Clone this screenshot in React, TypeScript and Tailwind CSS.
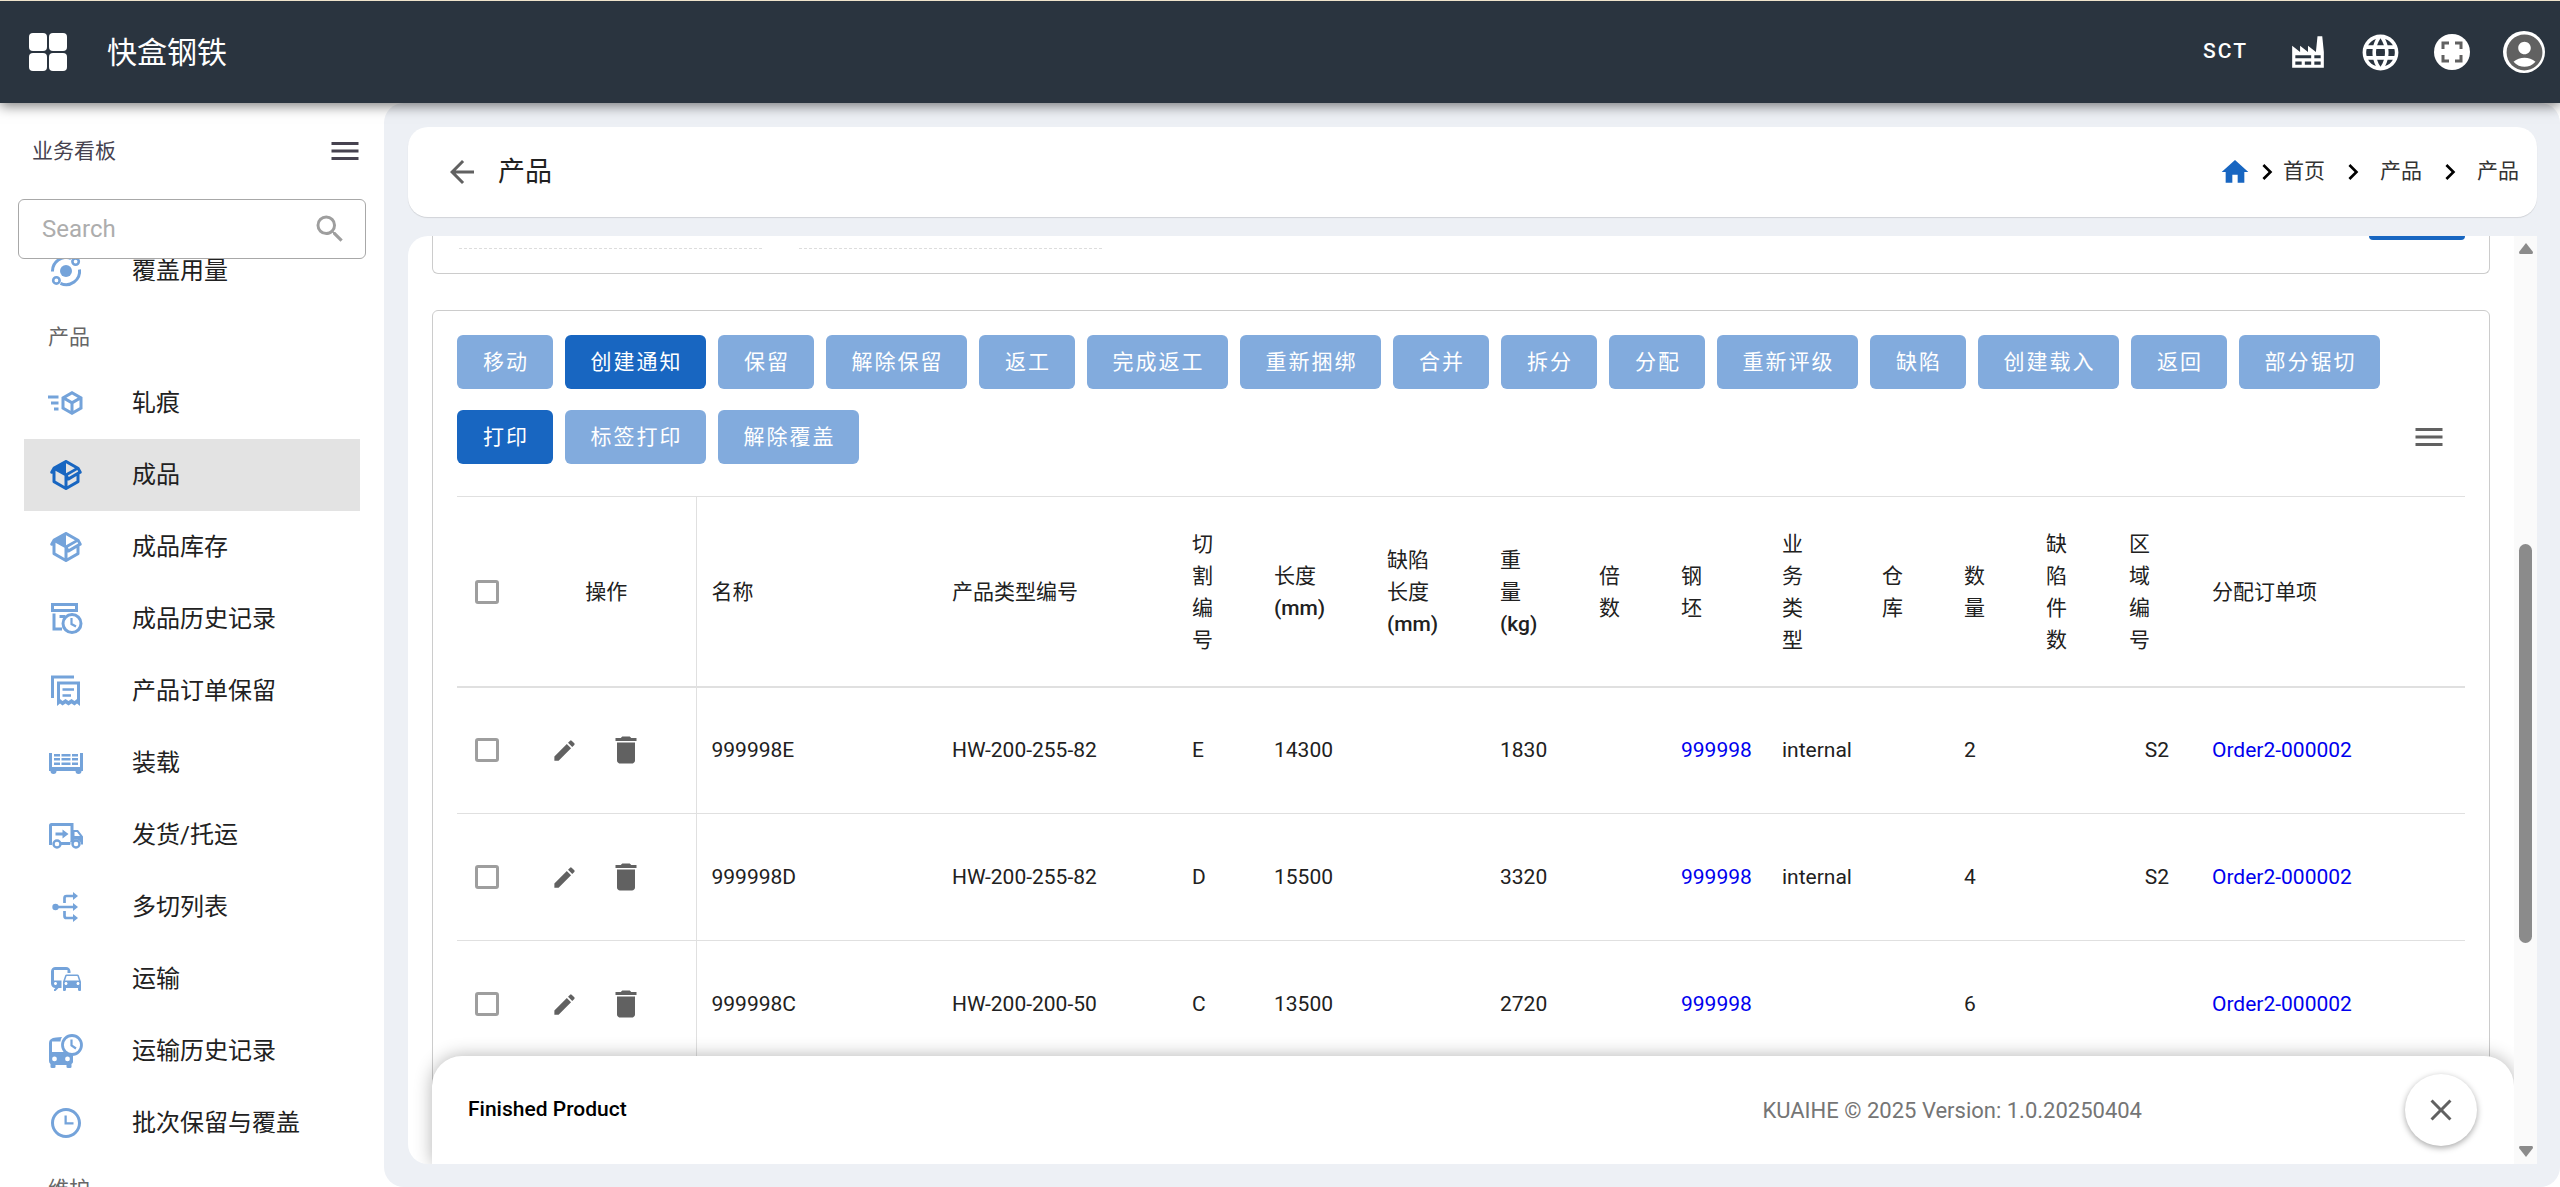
import { useState } from 'react'
import type { ReactNode } from 'react'
import {
  MdAccountCircle,
  MdArrowBack,
  MdChevronRight,
  MdClose,
  MdCommute,
  MdDelete,
  MdEdit,
  MdFullscreen,
  MdHome,
  MdLanguage,
  MdMenu,
  MdSearch,
} from 'react-icons/md'

function Icon({ children, size = 24 }: { children: ReactNode; size?: number }) {
  return (
    <svg className="size-9 shrink-0" viewBox={`0 0 ${size} ${size}`} fill="currentColor" aria-hidden="true">
      {children}
    </svg>
  )
}

const OrbitIcon = () => (
  <Icon size={36}>
    <circle cx="18" cy="18" r="6" />
    <g fill="none" stroke="currentColor" strokeWidth="3">
      <path d="M4.500 18.500A13.500 13.500 0 0 1 23 5.500" />
      <path d="M31.500 16.500A13.500 13.500 0 0 1 12.500 30.400" />
      <circle cx="27.600" cy="8.600" r="3.200" strokeWidth="2.600" />
      <circle cx="8.400" cy="27.400" r="3.200" strokeWidth="2.600" />
    </g>
  </Icon>
)

const CubeSendIcon = () => (
  <Icon>
    <path d="M16,4L9,8.04V15.96L16,20L23,15.96V8.04M16,6.31L19.8,8.5L16,10.69L12.21,8.5M0,7V9H7V7M11,10.11L15,12.42V17.11L11,14.81M21,10.11V14.81L17,17.11V12.42M2,11V13H7V11M4,15V17H7V15" />
  </Icon>
)

const PackageIcon = () => (
  <Icon>
    <path d="M2,10.96C1.5,10.68 1.35,10.07 1.63,9.59L3.13,7C3.24,6.8 3.41,6.66 3.6,6.58L11.43,2.18C11.59,2.06 11.79,2 12,2C12.21,2 12.41,2.06 12.57,2.18L20.47,6.62C20.66,6.72 20.82,6.88 20.91,7.08L22.36,9.6C22.64,10.08 22.47,10.69 22,10.96L21,11.54V16.5C21,16.88 20.79,17.21 20.47,17.38L12.57,21.82C12.41,21.94 12.21,22 12,22C11.79,22 11.59,21.94 11.43,21.82L3.53,17.38C3.21,17.21 3,16.88 3,16.5V10.96C2.7,11.13 2.32,11.14 2,10.96M12,4.15V4.15L12,10.85V10.85L17.96,7.5L12,4.15M5,15.91L11,19.29V12.58L5,9.21V15.91M19,15.91V12.69L14,15.59C13.67,15.77 13.3,15.76 13,15.6V19.29L19,15.91M13.85,13.36L20.13,9.73L19.55,8.72L13.27,12.35L13.85,13.36Z" />
  </Icon>
)

const ArchiveClockIcon = () => (
  <Icon size={36}>
    <g fill="none" stroke="currentColor" strokeWidth="3">
      <path d="M4.500 3.500H28.500V9.500H4.500Z" />
      <path d="M6 12.500V28H14" />
      <path d="M11.500 15.500H17" />
      <circle cx="24" cy="22.500" r="9" />
      <path d="M23.500 17V23L28 25.500" strokeWidth="2.200" />
    </g>
  </Icon>
)

const ReceiptsIcon = () => (
  <Icon size={36}>
    <g fill="none" stroke="currentColor" strokeWidth="3">
      <path d="M4.500 25V4H26" />
      <path d="M10.500 28V10H30.500V28" />
      <path d="M14.500 16.500H26M14.500 22.500H23" strokeWidth="2.600" />
    </g>
    <path d="M9 25H12V26L14.500 28L17.500 26L20.500 28L23.500 26L26.500 28L29 26V25H32V33L29 30.500L26.500 32.500L23.500 30.500L20.500 32.500L17.500 30.500L14.500 32.500L12 30.500L9 33Z" />
  </Icon>
)

const LoadIcon = () => (
  <Icon size={36}>
    <path d="M1 8H4V22H32V8H35V26H33.500A3 3 0 0 1 27.500 26H8.500A3 3 0 0 1 2.500 26H1Z" />
    <path d="M6 9H12V11.500H6ZM13.500 9H22.500V11.500H13.500ZM24 9H30V11.500H24ZM6 13H12V15.500H6ZM13.500 13H22.500V15.500H13.500ZM24 13H30V15.500H24ZM6 17.500H12V20H6ZM13.500 17.500H22.500V20H13.500ZM24 17.500H30V20H24Z" />
  </Icon>
)

const TruckIcon = () => (
  <Icon size={36}>
    <g fill="none" stroke="currentColor" strokeWidth="3">
      <path d="M4 26.500H2.500V8.500Q2.500 7.500 3.500 7.500H24V25" />
      <path d="M12.500 26.500H22" />
      <circle cx="9" cy="27" r="3.500" strokeWidth="2.400" />
      <circle cx="28" cy="27" r="3.500" strokeWidth="2.400" />
    </g>
    <path d="M24 13H30L35 19.500V27.500H33A5 5 0 0 0 23 27.500H22.500V24H24ZM26.500 15V19H32L29 15Z" fillRule="evenodd" />
    <path d="M7.500 15.500H14.500V12.500L20.500 17L14.500 21.500V18.500H7.500Z" />
  </Icon>
)

const SplitIcon = () => (
  <Icon size={36}>
    <circle cx="7.500" cy="18" r="3.200" />
    <path d="M7 18H26M16.500 14V9Q16.500 7 18.500 7H26M16.500 22V27Q16.500 29 18.500 29H26" fill="none" stroke="currentColor" strokeWidth="2.700" />
    <path d="M25 3L30 7L25 11ZM25 14L30 18L25 22ZM25 25L30 29L25 33Z" />
  </Icon>
)

const BusClockIcon = () => (
  <Icon size={36}>
    <path d="M1 10Q1 5 8 4.500L14 4Q12.500 6 12.500 8.500H4V19H17Q20 22 25 22.500V29Q25 30 23.500 31V34Q23.500 35 22 35H20Q18.500 35 18.500 34V32H7.500V34Q7.500 35 6 35H4Q2.500 35 2.500 34V31Q1 30 1 28ZM6.500 23.500A2.400 2.400 0 1 0 6.500 28.300A2.400 2.400 0 1 0 6.500 23.500ZM19.500 23.500A2.400 2.400 0 1 0 19.500 28.300A2.400 2.400 0 1 0 19.500 23.500Z" fillRule="evenodd" />
    <g fill="none" stroke="currentColor">
      <circle cx="24" cy="12" r="9.500" strokeWidth="2.800" />
      <path d="M23.500 6.500V12.500L28 15.500" strokeWidth="2.200" />
    </g>
  </Icon>
)

const ClockIcon = () => (
  <Icon>
    <path d="M12 20C16.4 20 20 16.4 20 12S16.4 4 12 4 4 7.6 4 12 7.6 20 12 20M12 2C17.5 2 22 6.5 22 12S17.5 22 12 22C6.5 22 2 17.5 2 12C2 6.5 6.5 2 12 2M17 11.5V13H11V7H12.5V11.5H17Z" />
  </Icon>
)

const navItems: { label: string; icon: ReactNode }[] = [
  { label: '轧痕', icon: <CubeSendIcon /> },
  { label: '成品', icon: <PackageIcon /> },
  { label: '成品库存', icon: <PackageIcon /> },
  { label: '成品历史记录', icon: <ArchiveClockIcon /> },
  { label: '产品订单保留', icon: <ReceiptsIcon /> },
  { label: '装载', icon: <LoadIcon /> },
  { label: '发货/托运', icon: <TruckIcon /> },
  { label: '多切列表', icon: <SplitIcon /> },
  { label: '运输', icon: <MdCommute className="size-9 shrink-0" /> },
  { label: '运输历史记录', icon: <BusClockIcon /> },
  { label: '批次保留与覆盖', icon: <ClockIcon /> },
]

const actions = [
  '移动', '创建通知', '保留', '解除保留', '返工', '完成返工', '重新捆绑', '合并', '拆分', '分配',
  '重新评级', '缺陷', '创建载入', '返回', '部分锯切', '打印', '标签打印', '解除覆盖',
]
const enabledActions = ['创建通知', '打印']

// size covers the column width and the right padding that makes narrow titles wrap
const columns = [
  { label: '名称', size: 'w-[241px]' },
  { label: '产品类型编号', size: 'w-[240px]' },
  { label: '切割编号', size: 'w-[82px] pr-11' },
  { label: '长度', unit: '(mm)', size: 'w-[113px] pr-11' },
  { label: '缺陷长度', unit: '(mm)', size: 'w-[113px] pr-11' },
  { label: '重量', unit: '(kg)', size: 'w-[99px] pr-11' },
  { label: '倍数', size: 'w-[82px] pr-11' },
  { label: '钢坯', size: 'w-[101px] pr-[60px]' },
  { label: '业务类型', size: 'w-[100px] pr-[60px]' },
  { label: '仓库', size: 'w-[82px] pr-11' },
  { label: '数量', size: 'w-[82px] pr-11' },
  { label: '缺陷件数', size: 'w-[83px] pr-11' },
  { label: '区域编号', size: 'w-[83px] pr-11' },
  { label: '分配订单项', size: '' },
]

const rows = [
  { name: '999998E', type: 'HW-200-255-82', cut: 'E', length: 14300, weight: 1830, business: 'internal', qty: 2, area: 'S2' },
  { name: '999998D', type: 'HW-200-255-82', cut: 'D', length: 15500, weight: 3320, business: 'internal', qty: 4, area: 'S2' },
  { name: '999998C', type: 'HW-200-200-50', cut: 'C', length: 13500, weight: 2720, business: '', qty: 6, area: '' },
]

function NavItem({ label, icon, active, onClick }: { label: string; icon: ReactNode; active?: boolean; onClick?: () => void }) {
  return (
    <li>
      <a
        href="#"
        onClick={onClick}
        className={`mx-6 flex h-[72px] items-center gap-12 pl-6 text-2xl text-[#212121] ${active ? 'bg-[#e3e3e3]' : ''}`}
      >
        <span className={active ? 'text-[#1866c1]' : 'text-[#74a3da]'}>{icon}</span>
        {label}
      </a>
    </li>
  )
}

function Checkbox({ label }: { label: string }) {
  return (
    <input
      type="checkbox"
      aria-label={label}
      className="mx-auto block size-6 appearance-none rounded-[3px] border-[3px] border-[#9e9e9e] checked:bg-[#1866c1]"
    />
  )
}

function Header() {
  return (
    <header className="z-20 flex h-[103px] shrink-0 items-center border-t border-[#efe3cb] bg-[#2a343f] text-white shadow-[0_3px_12px_rgba(0,0,0,0.5)]">
      <button aria-label="Apps" className="ml-[29px] grid grid-cols-2 gap-[2px]">
        <span className="size-[18px] rounded-[4px] bg-white" />
        <span className="size-[18px] rounded-[4px] bg-white" />
        <span className="size-[18px] rounded-[4px] bg-white" />
        <span className="size-[18px] rounded-[4px] bg-white" />
      </button>
      <h1 className="ml-10 text-[30px]">快盒钢铁</h1>
      <button className="mr-6 ml-auto text-[21px] font-medium tracking-[2px]">SCT</button>
      <button aria-label="Plant" className="flex w-[72px] justify-center">
        <svg className="size-[38px]" viewBox="0 0 24 24" fill="currentColor">
          <path d="M4,18V20H8V18H4M4,14V16H14V14H4M10,18V20H14V18H10M16,14V16H20V14H16M16,18V20H20V18H16M2,22V8L7,12V8L12,12V8L17,12L18,2H21L22,12V22H2Z" />
        </svg>
      </button>
      <button aria-label="Language" className="flex w-[72px] justify-center">
        <MdLanguage className="size-[43px]" />
      </button>
      <button aria-label="Fullscreen" className="flex w-[72px] justify-center">
        <span className="rounded-full bg-white text-[#616161]">
          <MdFullscreen className="size-9" />
        </span>
      </button>
      <button aria-label="Account" className="flex w-[72px] justify-center">
        <span className="flex size-[42px] items-center justify-center rounded-full bg-white text-[#616161]">
          <MdAccountCircle className="size-[43px] shrink-0" />
        </span>
      </button>
    </header>
  )
}

function Sidebar() {
  const [active, setActive] = useState('成品')

  return (
    <aside className="flex w-96 shrink-0 flex-col">
      <div className="flex h-24 shrink-0 items-center justify-between pr-[21px] pl-8 text-[#46424f]">
        <span className="pt-[2px] text-[21px]">业务看板</span>
        <button aria-label="Toggle menu">
          <MdMenu className="size-9" />
        </button>
      </div>
      <label className="mx-[18px] flex h-[60px] shrink-0 items-center rounded-md border border-[#a8a8a8] pr-[17px] pl-[23px]">
        <input className="w-full min-w-0 text-2xl outline-none placeholder:text-[#adadad]" placeholder="Search" aria-label="Search" />
        <MdSearch className="size-9 shrink-0 text-[#9e9e9e]" />
      </label>
      <nav className="min-h-0 flex-1 overflow-hidden">
        <ul className="-mt-6">
          <NavItem label="覆盖用量" icon={<OrbitIcon />} />
          <li className="flex h-[60px] items-center pt-[2px] pl-12 text-[21px] text-[#666]">产品</li>
          {navItems.map(item => (
            <NavItem key={item.label} {...item} active={item.label === active} onClick={() => setActive(item.label)} />
          ))}
          <li className="flex h-[60px] items-center pt-[2px] pl-12 text-[21px] text-[#666]">维护</li>
        </ul>
      </nav>
    </aside>
  )
}

function TitleBar() {
  return (
    <div className="flex h-[90px] shrink-0 items-center rounded-[20px] bg-white pr-[18px] pl-9 shadow-[0_1px_1px_rgba(0,0,0,0.12)]">
      <button aria-label="Back" className="text-[#616161]">
        <MdArrowBack className="size-9" />
      </button>
      <h2 className="ml-[18px] text-[27px] text-[#212121]">产品</h2>
      <nav aria-label="Breadcrumb" className="ml-auto flex items-center text-[21px] text-[#333]">
        <a href="#" aria-label="Home"><MdHome className="size-8 text-[#1866c1]" /></a>
        <MdChevronRight className="size-8 text-black" />
        <a href="#">首页</a>
        <MdChevronRight className="ml-3 mr-[11px] size-8 text-black" />
        <a href="#">产品</a>
        <MdChevronRight className="ml-3 mr-[11px] size-8 text-black" />
        <span>产品</span>
      </nav>
    </div>
  )
}

function ProductTable() {
  return (
    <table className="mt-8 w-full table-fixed border-t border-[#e0e0e0] text-left text-[21px] leading-8 text-[#212121]">
      <thead>
        <tr className="h-[190px] border-b-2 border-[#e0e0e0] *:pt-[2px] *:font-normal">
          <th className="w-[60px]"><Checkbox label="全选" /></th>
          <th className="w-[179px] border-r border-[#e0e0e0] text-center">操作</th>
          {columns.map(col => (
            <th key={col.label} className={`pl-[15px] ${col.size}`}>
              {col.label}
              {col.unit && <> <span className="font-medium">{col.unit}</span></>}
            </th>
          ))}
        </tr>
      </thead>
      <tbody>
        {rows.map(row => (
          <tr key={row.name} className="h-[127px] border-b border-[#e0e0e0] *:pl-[15px]">
            <td className="pl-0!"><Checkbox label={row.name} /></td>
            <td className="border-r border-[#e0e0e0]">
              <div className="flex items-center gap-[30px] pl-[19px] text-[#616161]">
                <button aria-label="编辑"><MdEdit className="size-[27px]" /></button>
                <button aria-label="删除"><MdDelete className="size-9" /></button>
              </div>
            </td>
            <td>{row.name}</td>
            <td>{row.type}</td>
            <td>{row.cut}</td>
            <td>{row.length}</td>
            <td />
            <td>{row.weight}</td>
            <td />
            <td><a href="#" className="text-[#0000ee]">999998</a></td>
            <td>{row.business}</td>
            <td />
            <td>{row.qty}</td>
            <td />
            <td className="pr-7 text-right">{row.area}</td>
            <td><a href="#" className="text-[#0000ee]">Order2-000002</a></td>
          </tr>
        ))}
      </tbody>
    </table>
  )
}

function Footer() {
  return (
    <footer className="absolute right-0 bottom-0 left-6 flex h-[108px] items-center rounded-t-[30px] bg-white pr-[37px] pl-9 text-[21px] shadow-[0_0_18px_rgba(0,0,0,0.3)]">
      <span className="font-medium text-black">Finished Product</span>
      <span className="mr-[263px] ml-auto text-[22px] text-[#757575]">KUAIHE © 2025 Version: 1.0.20250404</span>
      <button
        aria-label="Close"
        className="flex size-[72px] items-center justify-center rounded-full bg-white text-[#616161] shadow-[0_2px_6px_rgba(0,0,0,0.35)]"
      >
        <MdClose className="size-9" />
      </button>
    </footer>
  )
}

function Scrollbar() {
  return (
    <div className="flex w-[23px] shrink-0 flex-col items-center justify-between bg-[#fafafa] py-[6px]" aria-hidden="true">
      <svg className="h-3 w-4" viewBox="0 0 16 12" fill="#8b8b8b"><path d="M8 1L15 10Q15 12 14 12H2Q1 12 1 10Z" /></svg>
      <div className="flex w-[13px] flex-1 flex-col pt-[290px] pb-[203px]">
        <div className="flex-1 rounded-full bg-[#8b8b8b]" />
      </div>
      <svg className="h-3 w-4" viewBox="0 0 16 12" fill="#8b8b8b"><path d="M8 11L15 2Q15 0 14 0H2Q1 0 1 2Z" /></svg>
    </div>
  )
}

export default function App() {
  return (
    <div className="flex h-screen flex-col overflow-hidden bg-white font-['Roboto','Noto_Sans_CJK_SC',sans-serif]">
      <Header />
      <div className="flex min-h-0 flex-1">
        <Sidebar />
        <main className="flex min-w-0 flex-1 flex-col gap-[19px] rounded-[20px] bg-[#edf0f5] pt-6 pr-[23px] pb-[23px] pl-6">
          <TitleBar />
          <div className="flex min-h-0 flex-1 overflow-hidden rounded-l-[20px] bg-white">
            <div className="relative min-w-0 flex-1 overflow-hidden pr-6 pl-6">
              {/* tail of the filter form above the table */}
              <section className="flex h-[38px] items-start rounded-b-md border border-t-0 border-[#ccc] pr-6 pl-[26px]">
                <div className="mt-3 mr-[37px] w-[303px] border-b border-dashed border-[#ddd]" />
                <div className="mt-3 w-[303px] border-b border-dashed border-[#ddd]" />
                <div className="ml-auto h-1 w-24 rounded-b-md bg-[#1866c1]" />
              </section>
              <section className="mt-9 min-h-full rounded-t-md border border-[#ccc] px-6 pt-6">
                <div className="flex flex-wrap items-center gap-x-3 gap-y-[21px]">
                  {actions.map(label => (
                    <button
                      key={label}
                      disabled={!enabledActions.includes(label)}
                      className={`h-[54px] rounded-md pt-[2px] pl-[2px] text-[21px] tracking-[2px] text-white bg-[#1866c1] disabled:bg-[#82abdd] ${label.length > 2 ? 'w-[141px]' : 'w-24'}`}
                    >
                      {label}
                    </button>
                  ))}
                  <button aria-label="Columns" className="mr-[18px] ml-auto text-[#616161]">
                    <MdMenu className="size-9" />
                  </button>
                </div>
                <ProductTable />
              </section>
              <Footer />
            </div>
            <Scrollbar />
          </div>
        </main>
      </div>
    </div>
  )
}
